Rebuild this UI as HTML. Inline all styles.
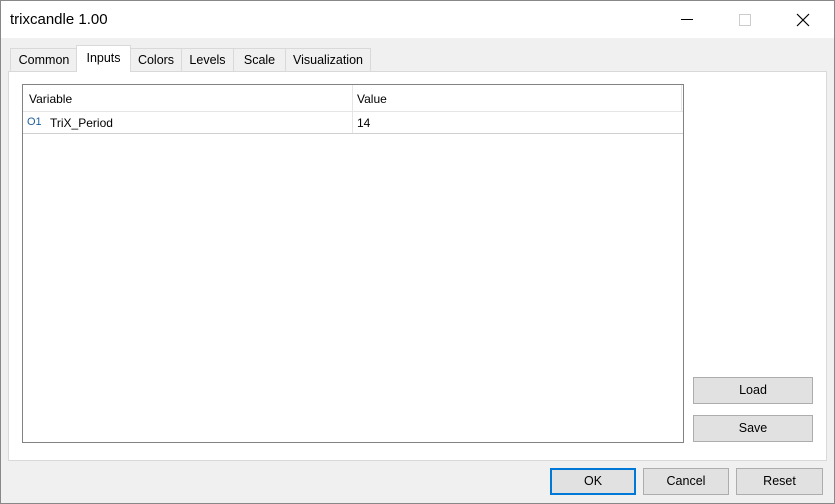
<!DOCTYPE html><html><head><style>
body{margin:0;width:835px;height:504px;overflow:hidden;font-family:"Liberation Sans",sans-serif;font-size:12px;color:#000}
.win{position:absolute;left:0;top:0;width:833px;height:502px;border:1px solid #888;background:#f0f0f0}
.title{position:absolute;left:0;top:0;width:833px;height:37px;background:#fff}
.title span{position:absolute;left:9px;top:10px;font-size:15px}
.a{position:absolute}
.tab{position:absolute;top:47px;height:22px;border:1px solid #d9d9d9;border-bottom:none;background:#f0f0f0;text-align:center;line-height:23px;font-size:12.5px}
.panel{position:absolute;left:7px;top:70px;width:817px;height:388px;background:#fff;border:1px solid #d9d9d9}
.btn{position:absolute;background:#e1e1e1;border:1px solid #adadad;text-align:center;font-size:12.5px}
</style></head><body><div class="win">
<div class="title"><span>trixcandle 1.00</span>
<div class="a" style="left:680px;top:18px;width:12px;height:1px;background:#000"></div>
<div class="a" style="left:738px;top:13px;width:10px;height:10px;border:1px solid #ccc"></div>
<svg class="a" style="left:795px;top:12px" width="14" height="14"><path d="M1 1L13 13M13 1L1 13" stroke="#000" stroke-width="1.2"/></svg>
</div>
<div class="panel">
<div class="a" style="left:13px;top:12px;width:660px;height:357px;border:1px solid #828282">
<div class="a" style="left:0;top:0;width:660px;height:26px;border-bottom:1px solid #e5e5e5"></div>
<div class="a" style="left:329px;top:0;width:1px;height:49px;background:#e5e5e5"></div>
<div class="a" style="left:658px;top:0;width:1px;height:26px;background:#e5e5e5"></div>
<div class="a" style="left:0;top:48px;width:660px;height:1px;background:#d0d0d0"></div>
<div class="a" style="left:6px;top:7px">Variable</div>
<div class="a" style="left:334px;top:7px">Value</div>
<div class="a" style="left:4px;top:31px;color:#1f5f9f;font-size:11px">O1</div>
<div class="a" style="left:27px;top:31px">TriX_Period</div>
<div class="a" style="left:334px;top:31px">14</div>
</div>
<div class="btn" style="left:684px;top:305px;width:118px;height:25px;line-height:25px">Load</div>
<div class="btn" style="left:684px;top:343px;width:118px;height:25px;line-height:25px">Save</div>
</div>
<div class="tab" style="left:9px;width:66px">Common</div>
<div class="tab" style="left:75px;top:44px;height:26px;width:53px;background:#fff;line-height:25px;z-index:2">Inputs</div>
<div class="tab" style="left:129px;width:50px">Colors</div>
<div class="tab" style="left:180px;width:51px">Levels</div>
<div class="tab" style="left:232px;width:51px">Scale</div>
<div class="tab" style="left:284px;width:84px">Visualization</div>
<div class="btn" style="left:549px;top:467px;width:82px;height:23px;line-height:23px;border:2px solid #0078d7">OK</div>
<div class="btn" style="left:642px;top:467px;width:84px;height:25px;line-height:25px">Cancel</div>
<div class="btn" style="left:735px;top:467px;width:85px;height:25px;line-height:25px">Reset</div>
</div></body></html>
